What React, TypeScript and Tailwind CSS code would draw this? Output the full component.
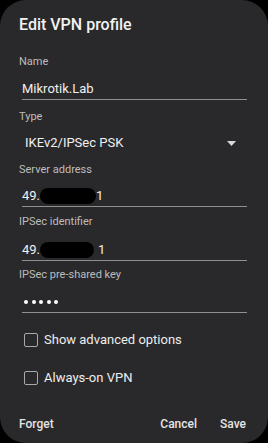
import React from 'react'

const font = { fontFamily: 'Roboto, "Noto Sans", sans-serif' }

function Label({ text, className = '' }: { text: string; className?: string }) {
  return <div className={`h-4 text-[11px] leading-4 text-[#bdbdbd] ${className}`}>{text}</div>
}

function Redacted({ w }: { w: string }) {
  return <span className={`inline-block h-[16px] rounded-full bg-black align-middle ${w}`} />
}

function Checkbox({ label, className = '' }: { label: string; className?: string }) {
  return (
    <div className={`flex h-5 items-center gap-[6px] pl-[5px] ${className}`}>
      <span className="h-[14px] w-[14px] rounded-[2px] border-[1.5px] border-[#a8a8a8]" />
      <span className="text-[13px] leading-5 text-[#ededed]">{label}</span>
    </div>
  )
}

export default function App() {
  return (
    <div className="h-[443px] w-[268px] bg-black" style={font}>
      <div className="flex h-full flex-col rounded-[26px] bg-[#29292b] pl-[19px] pr-[21px] pt-[15px]">
        <h1 className="h-5 text-[16px] font-medium leading-5 text-[#f2f2f2]">Edit VPN profile</h1>

        <Label text="Name" className="mt-[19px]" />
        <div className="ml-[3px] mt-[9px] h-[21px] border-b border-[#8f8f8f] text-[13px] leading-5 text-[#f0f0f0]">
          Mikrotik.Lab
        </div>

        <Label text="Type" className="mt-[9px]" />
        <div className="mt-[8px] flex h-5 items-center justify-between pl-[6px] pr-[11px] text-[13px] text-[#f0f0f0]">
          <span>IKEv2/IPSec PSK</span>
          <svg width="9" height="5" viewBox="0 0 9 5">
            <path d="M0 0h9L4.5 5z" fill="#d8d8d8" />
          </svg>
        </div>

        <Label text="Server address" className="mt-[9px]" />
        <div className="ml-[3px] mt-[8px] flex h-[21px] items-center border-b border-[#8f8f8f] text-[13px] leading-5 text-[#f0f0f0]">
          <span>49.</span>
          <Redacted w="w-[56px]" />
          <span>1</span>
        </div>

        <Label text="IPSec identifier" className="mt-[7px]" />
        <div className="ml-[3px] mt-[9px] flex h-[22px] items-center border-b border-[#8f8f8f] text-[13px] leading-5 text-[#f0f0f0]">
          <span>49.</span>
          <Redacted w="w-[54px]" />
          <span className="ml-[4px]">1</span>
        </div>

        <Label text="IPSec pre-shared key" className="mt-[6px]" />
        <div className="ml-[3px] mt-[8px] flex h-[22px] items-center gap-[3.5px] border-b border-[#8f8f8f] pl-[2px]">
          {[0, 1, 2, 3, 4].map((i) => (
            <span key={i} className="h-[4px] w-[4px] rounded-full bg-white" />
          ))}
        </div>

        <Checkbox label="Show advanced options" className="mt-[17px]" />
        <Checkbox label="Always-on VPN" className="mt-[18px]" />

        <div className="mt-[26px] flex h-5 items-center pr-[1px] text-[12px] font-medium text-[#e4e4e4]">
          <span>Forget</span>
          <span className="ml-auto">Cancel</span>
          <span className="ml-[23px]">Save</span>
        </div>
      </div>
    </div>
  )
}
